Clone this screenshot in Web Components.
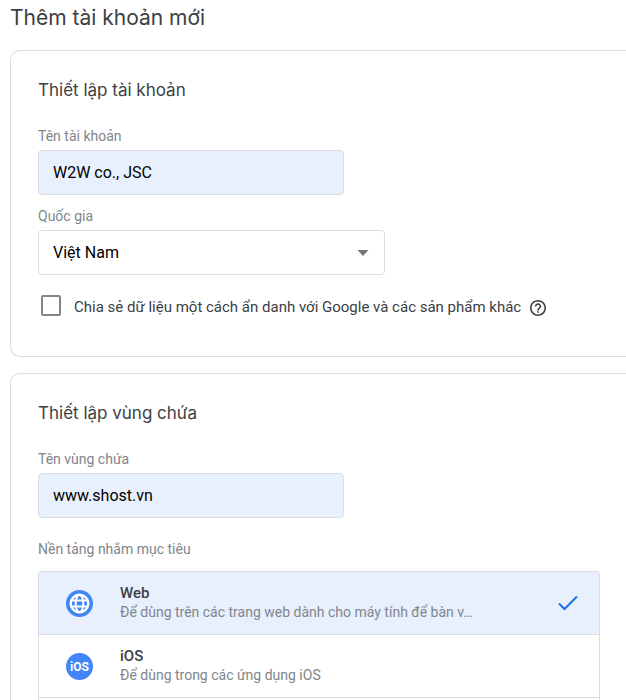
<!DOCTYPE html>
<html lang="vi">
<head>
<meta charset="utf-8">
<meta name="viewport" content="width=device-width, initial-scale=1">
<title>Thêm tài khoản mới</title>
<style>
  html {
    height: 100%;
  }
  body {
    margin: 0;
    height: 100%;
    overflow: hidden;
    background: #fff;
    color: #3c4043;
    font-family: Roboto, "Liberation Sans", sans-serif;
    font-size: 15px;
    --line: #dadce0;
    --tint: #e8f0fe;
    --blue: #4285f4;
    --muted: #80868b;
    --title-font: Inter, Roboto, sans-serif;
  }
</style>
</head>
<body>
<account-page heading="Thêm tài khoản mới">
  <setup-card heading="Thiết lập tài khoản">
    <text-field label="Tên tài khoản" value="W2W co., JSC"></text-field>
    <select-field label="Quốc gia" options="Việt Nam"></select-field>
    <check-field label="Chia sẻ dữ liệu một cách ẩn danh với Google và các sản phẩm khác"></check-field>
  </setup-card>
  <setup-card heading="Thiết lập vùng chứa" open>
    <text-field label="Tên vùng chứa" value="www.shost.vn"></text-field>
    <platform-list label="Nền tảng nhắm mục tiêu">
      <platform-option name="Web" blurb="Để dùng trên các trang web dành cho máy tính để bàn v…" selected>
        <svg width="27" height="27" viewBox="0 0 27 27" aria-hidden="true">
          <circle cx="13.5" cy="13.5" r="13.5" fill="#4285f4"/>
          <g fill="none" stroke="#fff" stroke-width="2">
            <circle cx="13.5" cy="13.5" r="8.8" stroke-width="2.4"/>
            <ellipse cx="13.5" cy="13.5" rx="3.8" ry="8.8"/>
            <path d="M5.5 10.5h16M5.5 16.5h16"/>
          </g>
        </svg>
      </platform-option>
      <platform-option name="iOS" blurb="Để dùng trong các ứng dụng iOS">
        <svg width="27" height="27" viewBox="0 0 27 27" aria-hidden="true">
          <circle cx="13.5" cy="13.5" r="13.5" fill="#4285f4"/>
          <text x="13.5" y="18" fill="#fff" text-anchor="middle" font-family="Roboto, sans-serif" font-size="12" font-weight="700">iOS</text>
        </svg>
      </platform-option>
    </platform-list>
  </setup-card>
</account-page>

<script>
class AccountPage extends HTMLElement {
  constructor() {
    super();
    this.attachShadow({ mode: "open" }).innerHTML = `
      <style>
        :host {
          display: flex;
          flex-direction: column;
          gap: 16px;
          min-height: 100%;
          padding-left: 10px;
        }
        h1 {
          margin: 4px 0 2px;
          font: 400 21px/28px var(--title-font);
        }
      </style>
      <h1>${this.getAttribute("heading")}</h1>
      <slot></slot>
    `;
  }
}

class SetupCard extends HTMLElement {
  constructor() {
    super();
    this.attachShadow({ mode: "open" }).innerHTML = `
      <style>
        :host {
          display: flex;
          flex-direction: column;
          box-sizing: border-box;
          padding: 27px 26px 35px 27px;
          border: 1px solid var(--line);
          border-right: 0;
          border-radius: 10px 0 0 10px;
        }
        :host([open]) {
          flex: 1;
          padding-bottom: 0;
          border-bottom: 0;
          border-bottom-left-radius: 0;
        }
        h2 {
          margin: 0 0 23px;
          font: 400 17px/24px var(--title-font);
        }
      </style>
      <h2>${this.getAttribute("heading")}</h2>
      <slot></slot>
    `;
  }
}

class TextField extends HTMLElement {
  constructor() {
    super();
    this.attachShadow({ mode: "open" }).innerHTML = `
      <style>
        :host {
          display: block;
          margin-bottom: 10px;
        }
        label {
          display: block;
          margin-bottom: 3px;
          color: var(--muted);
          font-size: 14px;
          line-height: 22px;
        }
        input {
          display: block;
          box-sizing: border-box;
          width: 100%;
          max-width: 306px;
          height: 45px;
          padding: 0 14px;
          border: 1px solid var(--line);
          border-radius: 4px;
          background: var(--tint);
          color: #000;
          font: 16px Roboto, sans-serif;
        }
      </style>
      <label for="field">${this.getAttribute("label")}</label>
      <input id="field" type="text" value="${this.getAttribute("value") || ""}">
    `;
  }
}

class SelectField extends HTMLElement {
  constructor() {
    super();
    const options = (this.getAttribute("options") || "").split(",");
    this.attachShadow({ mode: "open" }).innerHTML = `
      <style>
        :host {
          display: block;
          margin-bottom: 14px;
        }
        label {
          display: block;
          margin-bottom: 3px;
          color: var(--muted);
          font-size: 14px;
          line-height: 22px;
        }
        .box {
          display: grid;
          align-items: center;
          max-width: 347px;
        }
        select, svg {
          grid-area: 1 / 1;
        }
        select {
          appearance: none;
          box-sizing: border-box;
          width: 100%;
          height: 45px;
          padding: 0 14px;
          border: 1px solid var(--line);
          border-radius: 4px;
          background: #fff;
          color: #000;
          font: 16px Roboto, sans-serif;
        }
        svg {
          justify-self: end;
          margin-right: 16px;
          pointer-events: none;
        }
      </style>
      <label for="field">${this.getAttribute("label")}</label>
      <div class="box">
        <select id="field">${options.map(o => `<option>${o}</option>`).join("")}</select>
        <svg width="12" height="6" viewBox="0 0 12 6"><path d="M0.5 0h11L6 6z" fill="#757575"/></svg>
      </div>
    `;
  }
}

class CheckField extends HTMLElement {
  constructor() {
    super();
    this.attachShadow({ mode: "open" }).innerHTML = `
      <style>
        :host {
          display: flex;
          align-items: center;
          height: 32px;
          padding-left: 3px;
        }
        input {
          appearance: none;
          flex: none;
          box-sizing: border-box;
          width: 20px;
          height: 21px;
          margin: 0 13px 0 0;
          border: 2px solid var(--muted);
          border-radius: 2px;
        }
        input:checked {
          background: var(--blue);
        }
        label {
          padding-top: 4px;
          font-size: 15px;
          line-height: 20px;
        }
        button {
          display: flex;
          margin: 5px 0 0 9px;
          padding: 0;
          border: 0;
          background: none;
          color: inherit;
        }
      </style>
      <input id="field" type="checkbox">
      <label for="field">${this.getAttribute("label")}</label>
      <button type="button" aria-label="?">
        <svg width="16" height="16" viewBox="2 2 20 20" fill="currentColor">
          <path d="M11 18h2v-2h-2v2zm1-16C6.48 2 2 6.48 2 12s4.48 10 10 10 10-4.48 10-10S17.52 2 12 2zm0 18c-4.41 0-8-3.59-8-8s3.59-8 8-8 8 3.59 8 8-3.59 8-8 8zm0-14c-2.21 0-4 1.79-4 4h2c0-1.1.9-2 2-2s2 .9 2 2c0 2-3 1.75-3 5h2c0-2.25 3-2.5 3-5 0-2.21-1.79-4-4-4z"/>
        </svg>
      </button>
    `;
  }
}

class PlatformList extends HTMLElement {
  constructor() {
    super();
    this.attachShadow({ mode: "open" }).innerHTML = `
      <style>
        :host {
          display: flex;
          flex: 1;
          flex-direction: column;
          padding-top: 10px;
        }
        #label {
          margin-bottom: 11px;
          color: var(--muted);
          font-size: 14px;
          line-height: 22px;
        }
        .list {
          flex: 1;
          border: 1px solid var(--line);
          border-bottom: 0;
          border-radius: 4px 4px 0 0;
          overflow: hidden;
        }
      </style>
      <div id="label">${this.getAttribute("label")}</div>
      <div class="list" role="radiogroup" aria-labelledby="label"><slot></slot></div>
    `;
    this.addEventListener("click", e => {
      const picked = e.target.closest("platform-option");
      if (!picked) return;
      this.querySelectorAll("platform-option").forEach(o => o.toggleAttribute("selected", o === picked));
    });
  }
}

class PlatformOption extends HTMLElement {
  constructor() {
    super();
    this.attachShadow({ mode: "open" }).innerHTML = `
      <style>
        :host {
          display: block;
          border-bottom: 1px solid var(--line);
        }
        button {
          display: flex;
          align-items: center;
          width: 100%;
          height: 62px;
          padding: 0 21px 0 27px;
          border: 0;
          background: none;
          color: inherit;
          font: inherit;
          text-align: left;
        }
        :host([selected]) button {
          background: var(--tint);
        }
        .icon {
          display: flex;
          margin-right: 27px;
        }
        .text {
          flex: 1;
          min-width: 0;
        }
        .name, .blurb {
          display: block;
          line-height: 19px;
          white-space: nowrap;
          overflow: hidden;
          text-overflow: ellipsis;
        }
        .name {
          font-size: 15px;
          font-weight: 500;
        }
        .blurb {
          color: var(--muted);
          font-size: 14px;
        }
        .tick {
          display: none;
        }
        :host([selected]) .tick {
          display: block;
        }
      </style>
      <button type="button" role="radio">
        <span class="icon"><slot></slot></span>
        <span class="text">
          <span class="name">${this.getAttribute("name")}</span>
          <span class="blurb">${this.getAttribute("blurb")}</span>
        </span>
        <svg class="tick" width="20" height="16" viewBox="0 0 20 16">
          <path d="M1 8.5l5.500 5.500L19 1.500" fill="none" stroke="#1a73e8" stroke-width="2"/>
        </svg>
      </button>
    `;
  }

  static get observedAttributes() {
    return ["selected"];
  }

  connectedCallback() {
    this.updateChecked();
  }

  attributeChangedCallback() {
    this.updateChecked();
  }

  updateChecked() {
    this.shadowRoot.querySelector("button").setAttribute("aria-checked", this.hasAttribute("selected"));
  }
}

window.customElements.define("account-page", AccountPage);
window.customElements.define("setup-card", SetupCard);
window.customElements.define("text-field", TextField);
window.customElements.define("select-field", SelectField);
window.customElements.define("check-field", CheckField);
window.customElements.define("platform-list", PlatformList);
window.customElements.define("platform-option", PlatformOption);
</script>
</body>
</html>
